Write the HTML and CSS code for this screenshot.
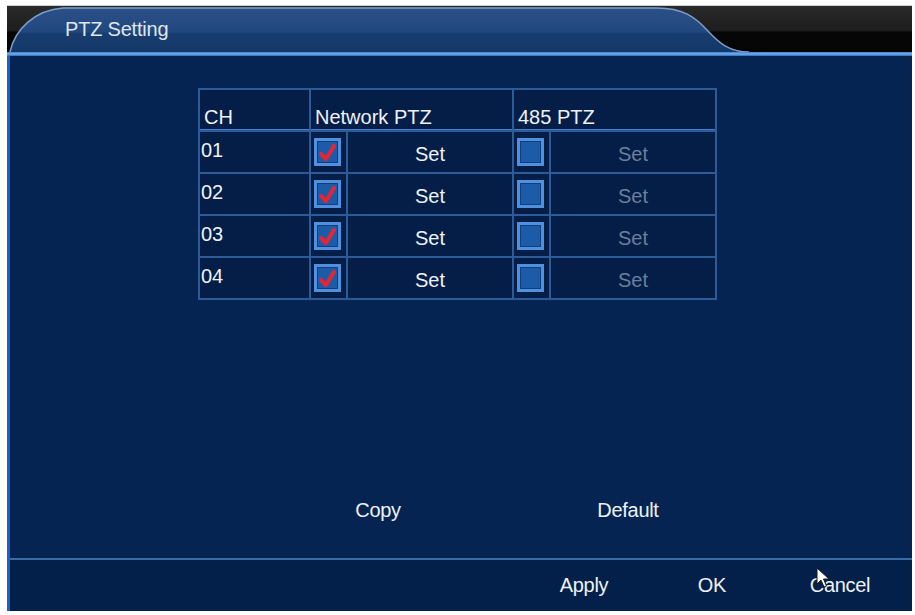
FILE: index.html
```html
<!DOCTYPE html>
<html lang="en">
<head>
<meta charset="utf-8">
<title>PTZ Setting</title>
<link rel="stylesheet" href="styles.css">
</head>
<body>
<div class="screen">
  <header class="titlebar">
    <svg class="tab" width="905" height="47" viewBox="0 0 905 47" aria-hidden="true">
      <defs>
        <linearGradient id="tabfill" x1="0" y1="0" x2="0" y2="1">
          <stop offset="0" stop-color="#2b5088"/>
          <stop offset="0.55" stop-color="#21487e"/>
          <stop offset="0.57" stop-color="#173c6e"/>
          <stop offset="1" stop-color="#143868"/>
        </linearGradient>
      </defs>
      <path d="M3,47 C8,24 28,5 56,3 L650,3 C676,3 688,12 700,25 C712,38 722,47 742,47 Z" fill="url(#tabfill)"/>
      <path d="M3,47 C8,24 28,5 56,3 L650,3 C676,3 688,12 700,25 C712,38 722,47 742,47" fill="none" stroke="#7d9ec8" stroke-width="1.5"/>
    </svg>
    <h1 class="title">PTZ Setting</h1>
  </header>
  <div class="glow"></div>
  <div class="panel">
    <main class="content">
      <div class="ptz-table">
        <div class="th">CH</div>
        <div class="th span2">Network PTZ</div>
        <div class="th span2">485 PTZ</div>

        <div class="td ch">01</div>
        <div class="td box-cell"><span class="chk on"><svg viewBox="0 0 21 22"><path d="M4,13 L9,18 L17,5"/></svg></span></div>
        <div class="td set">Set</div>
        <div class="td box-cell"><span class="chk"></span></div>
        <div class="td set off">Set</div>

        <div class="td ch">02</div>
        <div class="td box-cell"><span class="chk on"><svg viewBox="0 0 21 22"><path d="M4,13 L9,18 L17,5"/></svg></span></div>
        <div class="td set">Set</div>
        <div class="td box-cell"><span class="chk"></span></div>
        <div class="td set off">Set</div>

        <div class="td ch">03</div>
        <div class="td box-cell"><span class="chk on"><svg viewBox="0 0 21 22"><path d="M4,13 L9,18 L17,5"/></svg></span></div>
        <div class="td set">Set</div>
        <div class="td box-cell"><span class="chk"></span></div>
        <div class="td set off">Set</div>

        <div class="td ch">04</div>
        <div class="td box-cell"><span class="chk on"><svg viewBox="0 0 21 22"><path d="M4,13 L9,18 L17,5"/></svg></span></div>
        <div class="td set">Set</div>
        <div class="td box-cell"><span class="chk"></span></div>
        <div class="td set off">Set</div>
      </div>
      <div class="actions">
        <button class="btn">Copy</button>
        <button class="btn">Default</button>
      </div>
    </main>
    <div class="sep"></div>
    <footer class="footer">
      <button class="btn fbtn">Apply</button>
      <button class="btn fbtn">OK</button>
      <button class="btn fbtn">Cancel</button>
      <svg class="cursor" width="14" height="22" viewBox="0 0 14 22" aria-hidden="true">
        <path d="M1,1 L1,17 L5,13 L8,20 L10.5,19 L7.5,12 L13,12 Z" fill="#ffffff" stroke="#1a1a1a" stroke-width="1"/>
      </svg>
    </footer>
  </div>
</div>
</body>
</html>
```

FILE: styles.css
```css
html, body {
  margin: 0;
  padding: 0;
  background: #ffffff;
}

body {
  font-family: "Liberation Sans", Arial, sans-serif;
}

.screen {
  margin: 5px 0 0 7px;
  width: 905px;
}

.titlebar {
  display: grid;
  height: 47px;
  background: linear-gradient(to bottom, #c9ced6 0, #c9ced6 1px, #2a2a2a 1px, #1d1d1d 26px, #060606 27px, #050505 100%);
}

.tab {
  grid-area: 1 / 1;
  display: block;
}

.title {
  grid-area: 1 / 1;
  align-self: center;
  margin: 0;
  padding: 2px 0 0 58px;
  font-size: 20px;
  font-weight: normal;
  color: #dfe6ef;
  letter-spacing: -0.2px;
}

.glow {
  height: 4px;
  background: linear-gradient(to bottom, #3e7cc6 0, #6aa8ec 40%, #5a98e0 70%, #2f67ad 100%);
}

.panel {
  border-left: 3px solid #1f60c6;
}

.content {
  height: 502px;
  background: #062452;
  display: flex;
  flex-direction: column;
}

.ptz-table {
  margin: 32px 0 0 188px;
  width: 515px;
  display: grid;
  grid-template-columns: 109px 35px 164px 35px 164px;
  grid-template-rows: 40px repeat(4, 40px);
  gap: 2px;
  padding: 2px;
  background: #2b5c99;
}

.th, .td {
  background: #041e47;
  color: #eef2f7;
  font-size: 20px;
  line-height: 22px;
}

.th {
  display: flex;
  align-items: flex-end;
  padding: 0 0 2px 4px;
  box-shadow: inset 0 -1px 0 #3f7fcc;
}

.span2 {
  grid-column: span 2;
}

.ch {
  padding: 7px 0 0 1px;
}

.box-cell {
  display: flex;
  align-items: center;
}

.chk {
  box-sizing: border-box;
  display: block;
  width: 27px;
  height: 28px;
  margin: 0 0 0 3px;
  border: 3px solid #4f90df;
  background: #1c5ba8;
  box-shadow: inset 0 0 0 1px #123f7c;
}

.chk svg {
  display: block;
  width: 21px;
  height: 22px;
}

.chk svg path {
  fill: none;
  stroke: #e22636;
  stroke-width: 4.2;
  stroke-linecap: round;
  stroke-linejoin: round;
}

.set {
  display: flex;
  align-items: center;
  justify-content: center;
  padding-top: 3px;
}

.set.off {
  color: #6c7f9b;
}

.actions {
  margin-top: auto;
  display: flex;
  gap: 130px;
  padding: 0 0 28px 308px;
}

.btn {
  background: none;
  border: none;
  padding: 0;
  margin: 0;
  height: 40px;
  width: 120px;
  font-family: "Liberation Sans", Arial, sans-serif;
  font-size: 20px;
  color: #eef2f7;
  letter-spacing: -0.3px;
}

.sep {
  height: 2px;
  background: #3a6ba6;
}

.footer {
  position: relative;
  height: 51px;
  background: #03204a;
  display: flex;
  justify-content: flex-end;
  align-items: center;
  gap: 18px;
  padding-right: 17px;
}

.fbtn {
  width: 110px;
}

.cursor {
  position: absolute;
  left: 806px;
  top: 7px;
}
```
